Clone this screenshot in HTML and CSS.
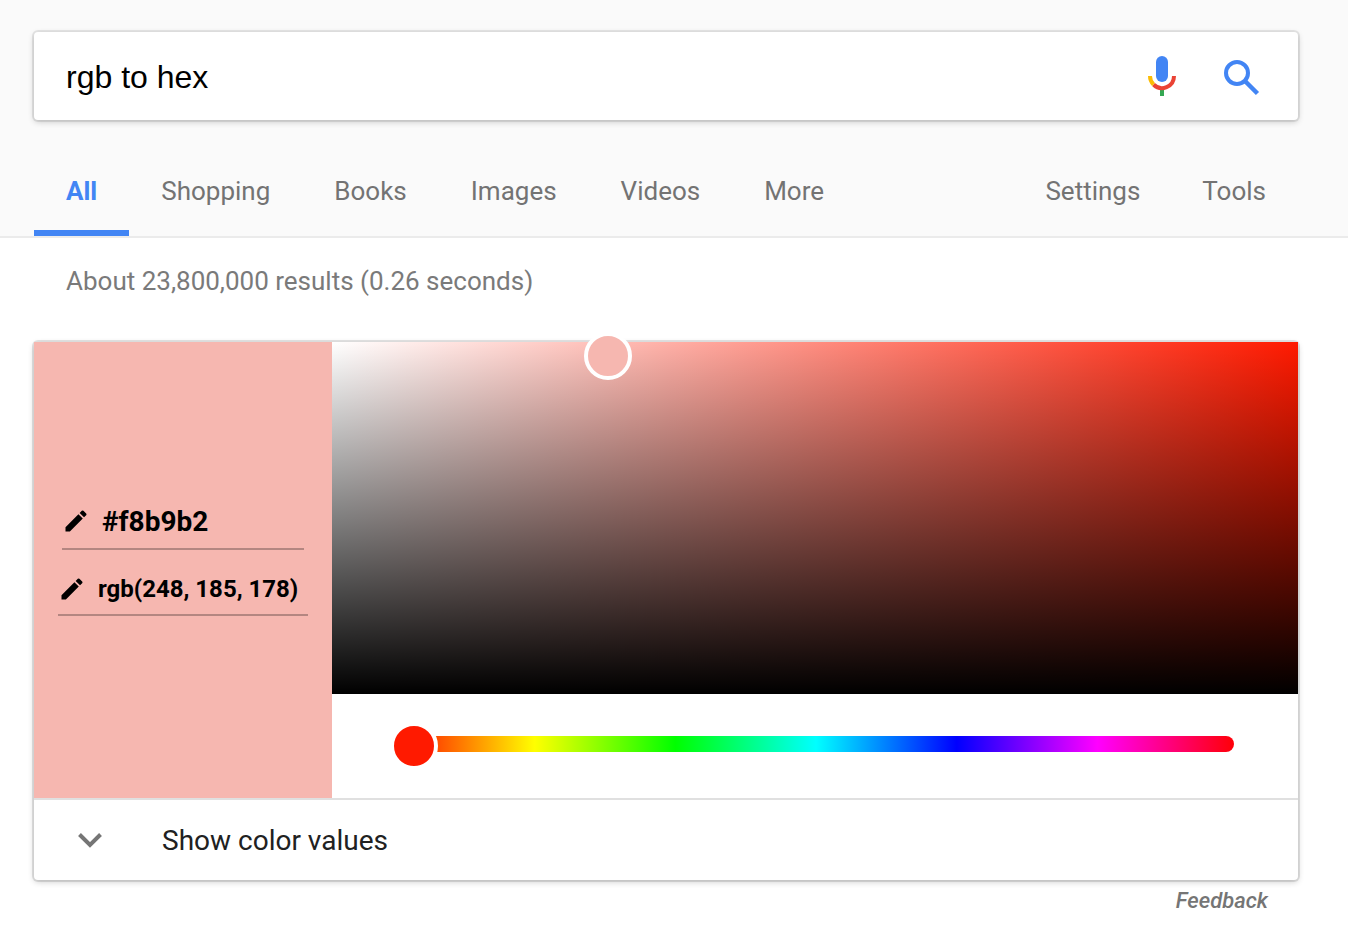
FILE: index.html
```html
<!DOCTYPE html>
<html lang="en">

<head>
    <meta charset="UTF-8">
    <meta name="viewport" content="width=device-width, initial-scale=1.0">
    <link rel="stylesheet" href="styles.css">
    <title>rgb to hex</title>
</head>

<body>

    <header class="header">
        <form class="search">
            <input class="search_input" type="text" value="rgb to hex" aria-label="Search">
            <button class="search_btn" type="button" aria-label="Search by voice">
                <svg width="40" height="40" viewBox="0 0 40 40" fill="none">
                    <rect x="14" y="0" width="12" height="26" rx="6" fill="#4285f4" />
                    <path d="M18 33h4v7h-4z" fill="#34a853" />
                    <path d="M32 20a12 12 0 0 1-20.5 8.5" stroke="#ea4335" stroke-width="4" />
                    <path d="M8 20a12 12 0 0 0 3.5 8.5" stroke="#fbbc05" stroke-width="4" />
                </svg>
            </button>
            <button class="search_btn" type="submit" aria-label="Search">
                <svg width="40" height="40" viewBox="0 0 40 40" fill="none" stroke="#4285f4">
                    <circle cx="15" cy="17" r="11" stroke-width="4" />
                    <path d="M23 25l12.500 12.500" stroke-width="4.500" />
                </svg>
            </button>
        </form>
        <nav class="tabs">
            <a class="tab tab_active" href="#">All</a>
            <a class="tab" href="#">Shopping</a>
            <a class="tab" href="#">Books</a>
            <a class="tab" href="#">Images</a>
            <a class="tab" href="#">Videos</a>
            <a class="tab" href="#">More</a>
            <a class="tab tab_right" href="#">Settings</a>
            <a class="tab" href="#">Tools</a>
        </nav>
    </header>

    <main class="main">
        <p class="stats">About 23,800,000 results (0.26 seconds)</p>

        <section class="card">
            <div class="picker">
                <div class="swatch">
                    <label class="field field_hex">
                        <svg class="pencil" viewBox="0 0 24 24">
                            <path d="M3 17.250V21h3.750L17.810 9.940l-3.750-3.750L3 17.250zM20.710 7.040a1 1 0 0 0 0-1.410l-2.340-2.340a1 1 0 0 0-1.410 0l-1.830 1.830 3.750 3.750 1.830-1.830z" />
                        </svg>
                        <input class="field_input" type="text" value="#f8b9b2" aria-label="Hex value">
                    </label>
                    <label class="field field_rgb">
                        <svg class="pencil" viewBox="0 0 24 24">
                            <path d="M3 17.250V21h3.750L17.810 9.940l-3.750-3.750L3 17.250zM20.710 7.040a1 1 0 0 0 0-1.410l-2.340-2.340a1 1 0 0 0-1.410 0l-1.830 1.830 3.750 3.750 1.830-1.830z" />
                        </svg>
                        <input class="field_input" type="text" value="rgb(248, 185, 178)" aria-label="RGB value">
                    </label>
                </div>
                <div class="controls">
                    <div class="palette">
                        <button class="marker" type="button" aria-label="Shade" style="left: 28.6%; top: 4%"></button>
                    </div>
                    <div class="hue">
                        <input class="hue_range" type="range" min="0" max="360" value="0" aria-label="Hue">
                    </div>
                </div>
            </div>
            <button class="more" type="button">
                <svg width="24" height="16" viewBox="0 0 24 16" fill="none" stroke="#757575" stroke-width="4">
                    <path d="M1.500 2.500L12 13L22.500 2.500" />
                </svg>
                <span>Show color values</span>
            </button>
        </section>

        <a class="feedback" href="#">Feedback</a>
    </main>

</body>

</html>
```
FILE: styles.css
```css
* {
    margin: 0px;
    padding: 0px;
    box-sizing: border-box;
}

body {
    background: #ffffff;
    font-family: Roboto, "Liberation Sans", sans-serif;
}

a {
    text-decoration: none;
}

button,
input {
    border: none;
    background: none;
    font-family: inherit;
    outline: none;
}

button {
    cursor: pointer;
}

svg {
    display: block;
    flex-shrink: 0;
}

.header {
    padding: 32px 50px 0px 34px;
    background: #fafafa;
    border-bottom: 2px solid #ebebeb;
}

.search {
    height: 88px;
    padding: 0px 36px 0px 32px;
    display: flex;
    align-items: center;
    gap: 40px;
    background: #ffffff;
    border-radius: 4px;
    box-shadow: 0 0 0 2px rgba(0, 0, 0, 0.08), 0 2px 6px rgba(0, 0, 0, 0.2);
}

.search_input {
    flex: 1;
    min-width: 0px;
    padding-top: 2px;
    font-family: "Liberation Sans", Arial, sans-serif;
    font-size: 32px;
    color: #000000;
}

.tabs {
    display: flex;
    margin-top: 32px;
}

.tab {
    padding: 0px 32px;
    border-bottom: 6px solid transparent;
    font-size: 26px;
    line-height: 78px;
    color: #737373;
}

.tab_active {
    font-weight: 700;
    color: #4285f4;
    border-color: #4285f4;
}

.tab_right {
    margin-left: auto;
    padding-right: 30px;
}

.main {
    padding: 24px 50px 32px 34px;
    display: flex;
    flex-direction: column;
}

.stats {
    margin-bottom: 42px;
    padding: 0px 32px;
    font-size: 26px;
    line-height: 38px;
    color: #7a7a7a;
}

.card {
    border-radius: 4px;
    box-shadow: 0 0 0 2px rgba(0, 0, 0, 0.1), 0 2px 6px rgba(0, 0, 0, 0.2);
}

.picker {
    display: flex;
}

.swatch {
    width: 298px;
    flex-shrink: 0;
    display: flex;
    flex-direction: column;
    align-items: center;
    justify-content: center;
    gap: 14px;
    padding-bottom: 30px;
    background: #f6b7b0;
}

.field {
    display: flex;
    align-items: center;
    gap: 12px;
    border-bottom: 2px solid #b48681;
}

.field_hex {
    width: 242px;
    height: 56px;
    font-size: 28px;
}

.field_rgb {
    width: 250px;
    height: 52px;
    font-size: 24px;
}

.field_input {
    flex: 1;
    min-width: 0px;
    font-size: inherit;
    font-weight: 700;
    color: #000000;
}

.pencil {
    width: 28px;
    height: 28px;
}

.controls {
    flex: 1;
    min-width: 0px;
}

.palette {
    position: relative;
    height: 352px;
    background: linear-gradient(to top, #000000, transparent), linear-gradient(to right, #ffffff, #ff1a00);
}

/* sits on the picked shade */
.marker {
    position: absolute;
    width: 48px;
    height: 48px;
    border: 4px solid #ffffff;
    border-radius: 50%;
    background: #f6b7b0;
    transform: translate(-50%, -50%);
}

.hue {
    padding: 26px 64px 30px 58px;
}

.hue_range {
    display: block;
    width: 100%;
    height: 48px;
    appearance: none;
    -webkit-appearance: none;
}

.hue_range::-webkit-slider-runnable-track {
    height: 16px;
    border-radius: 8px;
    background: linear-gradient(to right, #ff0000, #ffff00, #00ff00, #00ffff, #0000ff, #ff00ff, #ff0000) 4px 0px no-repeat;
}

.hue_range::-webkit-slider-thumb {
    -webkit-appearance: none;
    width: 48px;
    height: 48px;
    margin-top: -14px;
    border: 4px solid #ffffff;
    border-radius: 50%;
    background: #ff1a00;
}

.more {
    width: 100%;
    height: 82px;
    padding: 0px 44px;
    display: flex;
    align-items: center;
    gap: 60px;
    border-top: 2px solid #e0e0e0;
    font-size: 28px;
    color: #212121;
}

.feedback {
    align-self: flex-end;
    margin-right: 30px;
    font-size: 22px;
    font-weight: 500;
    font-style: italic;
    line-height: 42px;
    color: #757575;
}
```
